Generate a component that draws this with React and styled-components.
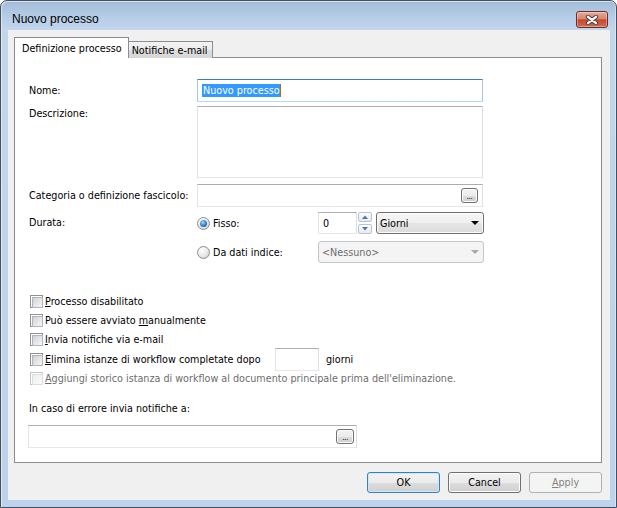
import React from 'react';
import styled, { createGlobalStyle, css } from 'styled-components';

const GlobalStyle = createGlobalStyle`
  html, body { margin: 0; padding: 0; background: #ffffff; }
  body { font-family: "DejaVu Sans Condensed", "DejaVu Sans", "Liberation Sans", sans-serif; font-stretch: condensed; font-size: 10.7px; color: #000; }
  * { box-sizing: border-box; }
`;

const Window = styled.div`
  width: 617px;
  height: 508px;
  border: 1px solid #45505d;
  border-radius: 7px 7px 0 0;
  background: linear-gradient(to bottom, #a2bcd8 0px, #b8cfe8 18px, #c2d6ec 29px, #bcd3eb 100%);
  box-shadow: inset 1px 1px 0 rgba(255, 255, 255, 0.55), inset -1px 0 0 rgba(255, 255, 255, 0.4);
  display: flex;
  flex-direction: column;
  padding: 0 6px 7px 7px;
  overflow: hidden;
`;

const TitleBar = styled.div`
  height: 29px;
  display: flex;
  align-items: flex-start;
  justify-content: space-between;
  flex: none;
`;

const Title = styled.div`
  font-family: "Liberation Sans", Arial, sans-serif;
  font-stretch: normal;
  font-size: 12px;
  line-height: 15px;
  margin: 11px 0 0 4px;
  color: #000;
`;

const CloseButton = styled.div`
  width: 32px;
  height: 17px;
  margin: 10px 2px 0 0;
  border: 1px solid #6e2b22;
  border-radius: 3px;
  background: linear-gradient(to bottom, #e9aa9c 0%, #d98470 45%, #c5472f 52%, #d06b4f 100%);
  box-shadow: inset 0 0 0 1px rgba(255, 255, 255, 0.35);
  display: flex;
  align-items: center;
  justify-content: center;
`;

const Client = styled.div`
  flex: 1;
  background: #f0f0f0;
  display: flex;
  flex-direction: column;
  padding: 7px 8px 7px 6px;
`;

const TabStrip = styled.div`
  display: flex;
  align-items: flex-end;
  height: 21px;
  margin-bottom: -1px;
  position: relative;
  z-index: 1;
  flex: none;
`;

const Tab = styled.div`
  display: flex;
  align-items: center;
  border: 1px solid #898c95;
  border-bottom: none;
  white-space: nowrap;
  ${(p) =>
    p.$active
      ? css`
          height: 21px;
          padding: 0 6px 0 7px;
          background: #ffffff;
        `
      : css`
          height: 17px;
          padding: 1px 4px 0 3px;
          border-left: none;
          background: linear-gradient(to bottom, #f3f3f3 0%, #ebebeb 50%, #dddddd 51%, #d6d6d6 100%);
        `}
`;

const Panel = styled.div`
  flex: 1;
  background: #ffffff;
  border: 1px solid #898c95;
  padding: 21px 0 0 14px;
  display: flex;
  flex-direction: column;
`;

const FieldRow = styled.div`
  display: grid;
  grid-template-columns: 168px 286px;
  align-items: ${(p) => (p.$top ? 'start' : 'center')};
  margin-top: ${(p) => p.$mt || 0}px;
`;

const Label = styled.div`
  line-height: ${(p) => p.$lh || 13}px;
  padding-top: ${(p) => p.$pt || 0}px;
  color: ${(p) => (p.$disabled ? '#6d6d6d' : '#000')};
  white-space: nowrap;
`;

const TextBox = styled.div`
  height: ${(p) => p.$h || 23}px;
  width: ${(p) => (p.$w ? `${p.$w}px` : 'auto')};
  border: 1px solid;
  border-color: ${(p) =>
    p.$focused ? '#3d7bad #a4c9e3 #b7d9ed #a4c9e3' : '#abadb3 #dbdfe6 #e3e9ef #e2e3ea'};
  background: #ffffff;
  display: flex;
  align-items: center;
  justify-content: ${(p) => (p.$browse ? 'flex-end' : 'flex-start')};
  padding: 0 ${(p) => p.$pr ?? 3}px 0 4px;
  margin-left: ${(p) => p.$ml || 0}px;
  flex: none;
`;

const Selected = styled.span`
  background: #3399ff;
  color: #ffffff;
  line-height: 13px;
  padding-left: 1px;
  border-right: 1px solid #cc6600;
`;

const BrowseButton = styled.div`
  width: ${(p) => p.$w || 17}px;
  height: 15px;
  border: 1px solid #707070;
  border-radius: 3px;
  background: linear-gradient(to bottom, #f2f2f2 0%, #ebebeb 50%, #dddddd 51%, #cfcfcf 100%);
  box-shadow: inset 0 0 0 1px #fcfcfc;
  font-size: 8px;
  line-height: 15px;
  text-align: center;
  color: #000;
  letter-spacing: -0.5px;
`;

const DurationGrid = styled.div`
  display: grid;
  grid-template-columns: 121px auto;
  row-gap: 7px;
  align-items: center;
`;

const RadioOption = styled.label`
  display: flex;
  align-items: center;
  gap: 3px;
  white-space: nowrap;
`;

const Radio = styled.span`
  width: 13px;
  height: 13px;
  border-radius: 50%;
  border: 1px solid #8e8f8f;
  background: radial-gradient(circle at 35% 30%, #ffffff 0%, #ececec 45%, #cbcbcb 100%);
  display: flex;
  align-items: center;
  justify-content: center;
  flex: none;
  &::after {
    content: '';
    display: ${(p) => (p.$checked ? 'block' : 'none')};
    width: 7px;
    height: 7px;
    border-radius: 50%;
    background: radial-gradient(circle at 40% 35%, #a6dcfa 0%, #3a8fd6 45%, #12407a 100%);
  }
`;

const Controls = styled.div`
  display: flex;
  align-items: center;
`;

const SpinButtons = styled.div`
  width: 14px;
  height: 22px;
  margin: 0 4px 0 1px;
  display: flex;
  flex-direction: column;
  justify-content: space-between;
`;

const SpinButton = styled.div`
  height: 10px;
  border: 1px solid #b9c3ce;
  border-radius: 2px;
  background: linear-gradient(to bottom, #ffffff, #e6e9ee);
  display: flex;
  align-items: center;
  justify-content: center;
`;

const Combo = styled.div`
  width: ${(p) => p.$w}px;
  height: 22px;
  border: 1px solid ${(p) => (p.$disabled ? '#c2c5ca' : '#707070')};
  border-radius: 3px;
  background: ${(p) =>
    p.$disabled
      ? '#f4f4f4'
      : 'linear-gradient(to bottom, #f6f6f6 0%, #efefef 50%, #e5e5e5 51%, #dcdcdc 100%)'};
  box-shadow: ${(p) => (p.$disabled ? 'none' : 'inset 0 0 0 1px #fcfcfc')};
  color: ${(p) => (p.$disabled ? '#6d6d6d' : '#000')};
  display: flex;
  align-items: center;
  justify-content: space-between;
  padding: 0 4px 0 3px;
`;

const Arrow = styled.span`
  width: 0;
  height: 0;
  border-left: 4px solid transparent;
  border-right: 4px solid transparent;
  border-top: 4px solid ${(p) => (p.$disabled ? '#a8a8a8' : '#000')};
`;

const CheckList = styled.div`
  display: flex;
  flex-direction: column;
  margin: 29px 0 0 1px;
`;

const CheckRow = styled.label`
  display: flex;
  align-items: center;
  height: ${(p) => p.$h || 19}px;
  color: ${(p) => (p.$disabled ? '#6d6d6d' : '#000')};
  white-space: nowrap;
`;

const Check = styled.span`
  width: 13px;
  height: 13px;
  border: 1px solid ${(p) => (p.$disabled ? '#c4c5c6' : '#8e8f8f')};
  background: #ffffff;
  padding: 1px;
  margin-right: 2px;
  flex: none;
  &::after {
    content: '';
    display: block;
    width: 100%;
    height: 100%;
    border: 1px solid ${(p) => (p.$disabled ? '#dcdee0' : '#b1b5ba')};
    background: ${(p) =>
      p.$disabled
        ? 'linear-gradient(135deg, #eeeeee, #fafafa)'
        : 'linear-gradient(135deg, #cdd1d6 0%, #e3e5e8 50%, #f7f7f7 100%)'};
  }
`;

const CheckText = styled.span`
  display: inline-block;
  width: ${(p) => (p.$w ? `${p.$w}px` : 'auto')};
`;

const Key = styled.span`
  text-decoration: underline;
`;

const SmallInput = styled(TextBox)`
  margin: -2px 0;
`;

const Suffix = styled.span`
  margin-left: 7px;
`;

const ErrorLabel = styled.div`
  line-height: 13px;
  margin-top: 14px;
`;

const ErrorField = styled.div`
  margin-top: 10px;
  display: flex;
`;

const ButtonRow = styled.div`
  display: flex;
  justify-content: flex-end;
  gap: 8px;
  margin-top: 9px;
  flex: none;
`;

const DialogButton = styled.div`
  width: 73px;
  height: 21px;
  border: 1px solid #707070;
  border-radius: 3px;
  background: linear-gradient(to bottom, #f2f2f2 0%, #ebebeb 50%, #dddddd 51%, #cfcfcf 100%);
  box-shadow: inset 0 0 0 1px #fcfcfc;
  display: flex;
  align-items: center;
  justify-content: center;
  color: #000;
  ${(p) =>
    p.$default &&
    css`
      border-color: #3c7fb1;
      box-shadow: inset 0 0 0 1px #c4eafc;
    `}
  ${(p) =>
    p.$disabled &&
    css`
      border-color: #adb2b5;
      background: #f4f4f4;
      box-shadow: none;
      color: #838383;
    `}
`;

function SpinArrow({ up }) {
  return (
    <svg width="6" height="4" viewBox="0 0 6 4">
      <path d={up ? 'M0 4 L3 0.5 L6 4 Z' : 'M0 0 L3 3.5 L6 0 Z'} fill="#4a7bb0" />
    </svg>
  );
}

export default function App() {
  return (
    <>
      <GlobalStyle />
      <Window>
        <TitleBar>
          <Title>Nuovo processo</Title>
          <CloseButton aria-label="Chiudi">
            <svg width="14" height="10" viewBox="0 0 14 10">
              <path d="M3 1.8 L11 8.2 M11 1.8 L3 8.2" stroke="#45403f" strokeWidth="4.2" strokeLinecap="round" />
              <path d="M3 1.8 L11 8.2 M11 1.8 L3 8.2" stroke="#ffffff" strokeWidth="2.3" strokeLinecap="round" />
            </svg>
          </CloseButton>
        </TitleBar>
        <Client>
          <TabStrip>
            <Tab $active>Definizione processo</Tab>
            <Tab>Notifiche e-mail</Tab>
          </TabStrip>
          <Panel>
            <FieldRow>
              <Label>Nome:</Label>
              <TextBox $focused>
                <Selected>Nuovo processo</Selected>
              </TextBox>
            </FieldRow>
            <FieldRow $mt={4} $top>
              <Label $pt={1}>Descrizione:</Label>
              <TextBox $h={72} />
            </FieldRow>
            <FieldRow $mt={6}>
              <Label>Categoria o definizione fascicolo:</Label>
              <TextBox $browse $pr={4}>
                <BrowseButton>...</BrowseButton>
              </TextBox>
            </FieldRow>
            <FieldRow $mt={5} $top>
              <Label $lh={22}>Durata:</Label>
              <DurationGrid>
                <RadioOption>
                  <Radio $checked />
                  Fisso:
                </RadioOption>
                <Controls>
                  <TextBox $w={39} $h={22}>0</TextBox>
                  <SpinButtons>
                    <SpinButton><SpinArrow up /></SpinButton>
                    <SpinButton><SpinArrow /></SpinButton>
                  </SpinButtons>
                  <Combo $w={108}>
                    Giorni
                    <Arrow />
                  </Combo>
                </Controls>
                <RadioOption>
                  <Radio />
                  Da dati indice:
                </RadioOption>
                <Controls>
                  <Combo $w={166} $disabled>
                    &lt;Nessuno&gt;
                    <Arrow $disabled />
                  </Combo>
                </Controls>
              </DurationGrid>
            </FieldRow>
            <CheckList>
              <CheckRow>
                <Check />
                <CheckText><Key>P</Key>rocesso disabilitato</CheckText>
              </CheckRow>
              <CheckRow>
                <Check />
                <CheckText>Può essere avviato <Key>m</Key>anualmente</CheckText>
              </CheckRow>
              <CheckRow>
                <Check />
                <CheckText><Key>I</Key>nvia notifiche via e-mail</CheckText>
              </CheckRow>
              <CheckRow $h={20}>
                <Check />
                <CheckText $w={230}><Key>E</Key>limina istanze di workflow completate dopo</CheckText>
                <SmallInput $w={44} />
                <Suffix>giorni</Suffix>
              </CheckRow>
              <CheckRow $disabled>
                <Check $disabled />
                <CheckText><Key>A</Key>ggiungi storico istanza di workflow al documento principale prima dell'eliminazione.</CheckText>
              </CheckRow>
            </CheckList>
            <ErrorLabel>In caso di errore invia notifiche a:</ErrorLabel>
            <ErrorField>
              <TextBox $w={329} $ml={-1} $browse $pr={2}>
                <BrowseButton $w={18}>...</BrowseButton>
              </TextBox>
            </ErrorField>
          </Panel>
          <ButtonRow>
            <DialogButton $default>OK</DialogButton>
            <DialogButton>Cancel</DialogButton>
            <DialogButton $disabled><span><Key>A</Key>pply</span></DialogButton>
          </ButtonRow>
        </Client>
      </Window>
    </>
  );
}
